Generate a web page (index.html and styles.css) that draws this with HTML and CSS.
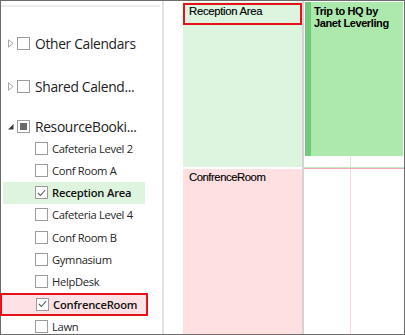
FILE: index.html
```html
<!DOCTYPE html>
<html>
<head>
<meta charset="utf-8">
<link rel="stylesheet" href="styles.css">
</head>
<body>
<div class="frame">
  <aside class="sidebar">
    <div class="topline"></div>
    <div class="group first">
      <svg class="tri" width="6" height="9" viewBox="0 0 6 9"><path d="M0.5 0.8 L5.2 4.5 L0.5 8.2 Z" fill="none" stroke="#a8a8a8" stroke-width="1"/></svg>
      <span class="cb"></span>
      <span class="glabel">Other Calendars</span>
    </div>
    <div class="group">
      <svg class="tri" width="6" height="9" viewBox="0 0 6 9"><path d="M0.5 0.8 L5.2 4.5 L0.5 8.2 Z" fill="none" stroke="#a8a8a8" stroke-width="1"/></svg>
      <span class="cb"></span>
      <span class="glabel">Shared Calend...</span>
    </div>
    <div class="group open">
      <svg class="tri" width="6" height="9" viewBox="0 0 6 9"><path d="M5.5 2 L5.5 7.5 L0 7.5 Z" fill="#3c3c3c"/></svg>
      <span class="cb partial"><span class="fill"></span></span>
      <span class="glabel">ResourceBooki...</span>
    </div>
    <ul class="items">
      <li class="item"><span class="cb"></span><span class="ilabel">Cafeteria Level 2</span></li>
      <li class="item"><span class="cb"></span><span class="ilabel">Conf Room A</span></li>
      <li class="item sel"><span class="cb"><svg width="9" height="8" viewBox="0 0 9 8"><path d="M0.8 3.8 L3.4 6.5 L8.2 1" fill="none" stroke="#555" stroke-width="1.1"/></svg></span><span class="ilabel bold">Reception Area</span></li>
      <li class="item"><span class="cb"></span><span class="ilabel">Cafeteria Level 4</span></li>
      <li class="item"><span class="cb"></span><span class="ilabel">Conf Room B</span></li>
      <li class="item"><span class="cb"></span><span class="ilabel">Gymnasium</span></li>
      <li class="item"><span class="cb"></span><span class="ilabel">HelpDesk</span></li>
      <li class="item marked"><span class="cb"><svg width="9" height="8" viewBox="0 0 9 8"><path d="M0.8 3.8 L3.4 6.5 L8.2 1" fill="none" stroke="#555" stroke-width="1.1"/></svg></span><span class="ilabel bold">ConfrenceRoom</span></li>
      <li class="item"><span class="cb"></span><span class="ilabel">Lawn</span></li>
    </ul>
  </aside>
  <main class="cal">
    <div class="ruler"></div>
    <div class="rescol">
      <div class="res green"><div class="res-head boxed">Reception Area</div></div>
      <div class="res pink"><div class="res-head">ConfrenceRoom</div></div>
    </div>
    <div class="divider"></div>
    <div class="daycol">
      <div class="daytop">
        <div class="appt">
          <div class="appt-bar"></div>
          <div class="appt-text">Trip to HQ by<br>Janet Leverling</div>
        </div>
        <div class="slots green-slots"><div class="slot"></div><div class="slot rest"></div></div>
      </div>
      <div class="hline g"></div>
      <div class="hline p"></div>
      <div class="slots pink-slots"><div class="slot"></div><div class="slot rest"></div></div>
    </div>
  </main>
</div>
</body>
</html>
```

FILE: styles.css
```css
* { box-sizing: border-box; margin: 0; padding: 0; }
html, body { width: 405px; height: 335px; overflow: hidden; background: #fff; }
body { font-family: "Open Sans", "Noto Sans", sans-serif; color: #2a2a2a; }

.frame {
  width: 405px;
  height: 335px;
  border: 1px solid #6c6c6c;
  display: flex;
  background: #fff;
}

/* Sidebar */
.sidebar {
  width: 163px;
  flex: none;
  border-right: 2px solid #e3e3e3;
  display: flex;
  flex-direction: column;
  overflow: visible;
}
.topline { height: 2px; width: 159px; background: #ececec; margin-top: 4px; flex: none; }

.group {
  display: flex;
  align-items: center;
  height: 43px;
  padding-left: 7px;
  flex: none;
}
.group.first { margin-top: 15px; }
.group.open { height: 21px; margin-top: 8px; }
.tri { flex: none; margin-right: 3px; }
.cb {
  width: 13px;
  height: 13px;
  flex: none;
  border: 1px solid #9c9c9c;
  background: #fff;
  display: flex;
  align-items: center;
  justify-content: center;
}
.cb .fill { width: 7px; height: 7px; background: #6a6a6a; }
.glabel {
  margin-left: 5px;
  font-size: 13.8px;
  letter-spacing: -0.32px;
  color: #222;
  white-space: nowrap;
}

.items { list-style: none; display: flex; flex-direction: column; flex: none; }
.item {
  height: 22.25px;
  display: flex;
  align-items: center;
  padding-left: 34px;
  flex: none;
}
.item.sel {
  margin-left: 2px;
  width: 142px;
  padding-left: 32px;
  background: #dff4df;
}
.item.marked {
  margin-left: -1px;
  width: 148px;
  height: 23px;
  padding-left: 34px;
  border: 2px solid #e5121b;
  background: #fde2e5;
}
.ilabel {
  margin-left: 4px;
  font-size: 11.2px;
  letter-spacing: -0.32px;
  color: #262626;
  white-space: nowrap;
}
.ilabel.bold { font-weight: 600; color: #111; letter-spacing: -0.2px; }

/* Calendar */
.cal { flex: 1; display: flex; }
.ruler { width: 19px; flex: none; }
.rescol { width: 119px; flex: none; display: flex; flex-direction: column; padding-top: 1px; }
.res { flex: none; }
.res.green { height: 165px; background: #ddf5df; margin-bottom: 2px; }
.res.pink { flex: 1; background: #fee0e3; }
.res-head {
  font-family: "Liberation Sans", Arial, sans-serif;
  font-size: 11.3px;
  letter-spacing: -0.28px;
  line-height: 13px;
  color: #000;
  -webkit-text-stroke: 0.15px #000;
  white-space: nowrap;
}
.res-head.boxed {
  margin-top: 1px;
  height: 22px;
  border: 2px solid #e5121b;
  padding-left: 4px;
}
.res.pink .res-head { padding: 2px 0 0 6px; letter-spacing: -0.45px; }

.divider { width: 2px; flex: none; background: #d4d4d4; }

.daycol { flex: 1; display: flex; flex-direction: column; }
.daytop { height: 166px; flex: none; display: flex; flex-direction: column; }
.appt {
  margin: 1px 1px 0 1px;
  height: 154px;
  flex: none;
  background: #ade8ac;
  display: flex;
}
.appt-bar { width: 6px; flex: none; background: #6fcb77; }
.appt-text {
  padding: 3px 0 0 3px;
  font-family: "Liberation Sans", Arial, sans-serif;
  font-weight: 700;
  font-size: 11px;
  letter-spacing: -0.4px;
  line-height: 12px;
  color: #000;
}
.slots { display: flex; flex: 1; }
.slot { width: 47px; flex: none; }
.slot.rest { flex: 1; }
.green-slots .slot:first-child { border-right: 1px solid #d6f0d7; }
.pink-slots .slot:first-child { border-right: 1px solid #fbdadf; }
.hline { height: 1px; flex: none; }
.hline.g { background: #c3e8c5; }
.hline.p { background: #f4a9b1; }
```
